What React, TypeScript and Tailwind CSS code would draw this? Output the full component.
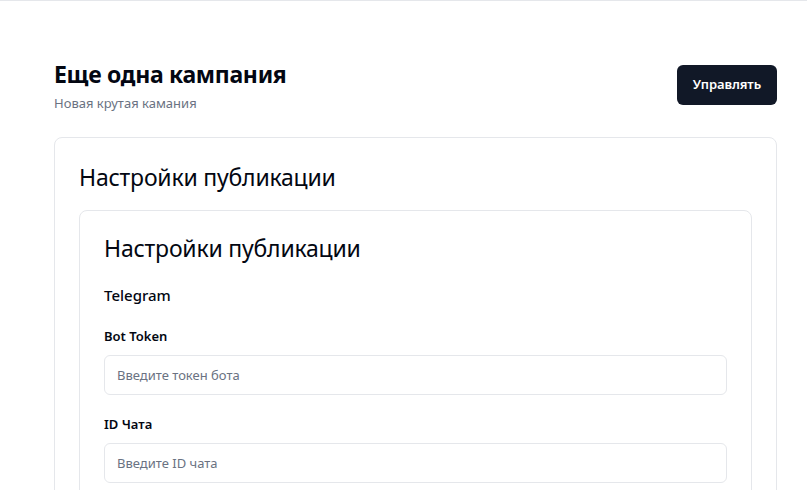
import React from 'react';

const font = { fontFamily: '"Noto Sans", "Open Sans", sans-serif' };

export default function App() {
  const fields = [
    { id: 'token', label: 'Bot Token', placeholder: 'Введите токен бота' },
    { id: 'chat', label: 'ID Чата', placeholder: 'Введите ID чата' },
  ];

  return (
    <div className="min-h-screen bg-white text-gray-950" style={font}>
      <div className="h-px bg-gray-200" />

      <div className="pl-[54px] pr-[30px] pt-[57px]">
        {/* Header */}
        <div className="flex items-start justify-between">
          <div>
            <h1 className="text-[23px] font-bold leading-8 tracking-[-0.3px]">Еще одна кампания</h1>
            <p className="text-[13px] text-gray-500 mt-1">Новая крутая камания</p>
          </div>
          <button className="mt-[7px] h-[40px] px-4 rounded-md bg-[#111827] text-white text-[13px] font-semibold tracking-[-0.1px]">
            Управлять
          </button>
        </div>

        {/* Outer card */}
        <div className="mt-[23px] border border-gray-200 rounded-lg px-6 pt-[23px]">
          <h2 className="text-[23px] leading-8 tracking-[-0.2px]">Настройки публикации</h2>

          {/* Inner card */}
          <div className="mt-[17px] border border-gray-200 rounded-lg px-6 pt-[21px] pb-6">
            <h3 className="text-[23px] leading-8 tracking-[-0.2px]">Настройки публикации</h3>
            <h4 className="mt-[20px] text-[15px] font-medium">Telegram</h4>

            <div className="mt-[20px] space-y-[19px]">
              {fields.map((f) => (
                <div key={f.id}>
                  <label htmlFor={f.id} className="block text-[13px] font-semibold leading-5">
                    {f.label}
                  </label>
                  <input
                    id={f.id}
                    placeholder={f.placeholder}
                    className="mt-[9px] w-full h-[40px] px-3 rounded-md border border-gray-200 text-[13px] placeholder:text-gray-500 outline-none"
                  />
                </div>
              ))}
            </div>
          </div>
        </div>
      </div>
    </div>
  );
}
